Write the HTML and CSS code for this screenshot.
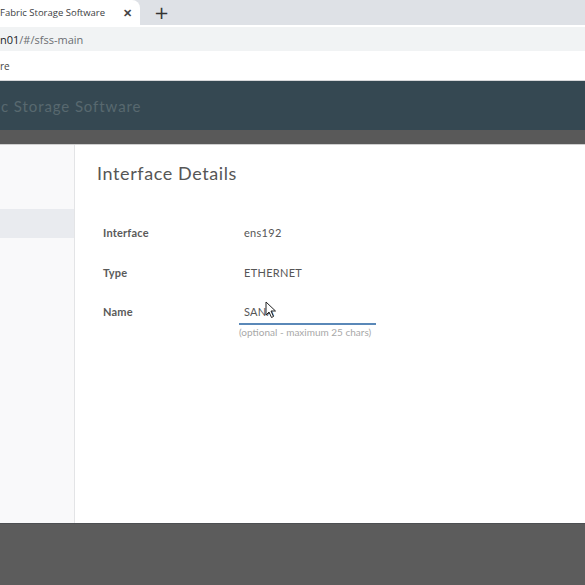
FILE: index.html
```html
<!DOCTYPE html>
<html>
<head>
<meta charset="utf-8">
<link rel="stylesheet" href="styles.css">
</head>
<body>
<div class="tabbar">
  <div class="tab">
    <span class="tab-title">Fabric Storage Software</span>
    <span class="tab-close">✕</span>
  </div>
  <span class="newtab">+</span>
</div>
<div class="toolbar">
  <div class="omnibox"><span class="host">n01</span><span class="path">/#/sfss-main</span></div>
</div>
<div class="bookmarks"><span>re</span></div>
<div class="appheader"><span class="apptitle">c Storage Software</span></div>
<div class="subband"></div>
<div class="content">
  <div class="sidebar">
    <div class="nav-item selected"></div>
  </div>
  <div class="main">
    <h1 class="title">Interface Details</h1>
    <div class="form">
      <div class="row">
        <div class="label">Interface</div>
        <div class="value">ens192</div>
      </div>
      <div class="row">
        <div class="label">Type</div>
        <div class="value">ETHERNET</div>
      </div>
      <div class="row">
        <div class="label">Name</div>
        <div class="field">
          <div class="input">SANA</div>
          <div class="helper">(optional - maximum 25 chars)</div>
          <svg class="cursor" width="12" height="18" viewBox="0 0 12 18"><path d="M1 1 L1 14 L4 11 L6.5 16.5 L8.5 15.5 L6 10 L10.5 10 Z" fill="#fff" stroke="#222" stroke-width="1" stroke-linejoin="round"/></svg>
        </div>
      </div>
    </div>
  </div>
</div>
<div class="footer"></div>
</body>
</html>
```
FILE: styles.css
```css
html, body {
  margin: 0;
  padding: 0;
  width: 585px;
  height: 585px;
  overflow: hidden;
  font-family: Lato, "Open Sans", sans-serif;
  background: #fff;
}
.tabbar {
  height: 25px;
  background: #dee1e6;
  display: flex;
  align-items: flex-end;
}
.tab {
  width: 140px;
  height: 25px;
  background: #fff;
  border-top-right-radius: 8px;
  display: flex;
  align-items: center;
  justify-content: space-between;
  padding-right: 8px;
  box-sizing: border-box;
  font-family: "Open Sans", sans-serif;
  font-size: 9.5px;
  color: #3c4043;
}
.tab-title { white-space: nowrap; }
.tab-close { font-size: 11px; color: #444; font-weight: bold; }
.newtab {
  align-self: center;
  margin-left: 14px;
  font-size: 18px;
  line-height: 20px;
  color: #333;
  font-family: "DejaVu Sans", sans-serif;
}
.toolbar {
  height: 26px;
  background: #fff;
  padding-top: 2px;
  box-sizing: border-box;
}
.omnibox {
  height: 24px;
  background: #f1f3f4;
  display: flex;
  align-items: center;
  font-family: "Open Sans", sans-serif;
  font-size: 11px;
}
.host { color: #202124; }
.path { color: #6b6e72; }
.bookmarks {
  height: 30px;
  background: #fff;
  border-bottom: 1px solid #d7d8da;
  display: flex;
  align-items: center;
  font-family: "Open Sans", sans-serif;
  font-size: 10px;
  color: #444;
  box-sizing: border-box;
}
.appheader {
  height: 49px;
  background: #354852;
  display: flex;
  align-items: center;
}
.apptitle {
  margin-left: 1px;
  font-size: 15px;
  color: #58686f;
  letter-spacing: 0.9px;
}
.subband {
  height: 14px;
  background: #595959;
  border-bottom: 1px solid #cfcfcf;
}
.content {
  height: 378px;
  display: flex;
}
.sidebar {
  width: 75px;
  background: #f9f9fa;
  border-right: 1px solid #e3e4e6;
  padding-top: 64px;
  box-sizing: border-box;
}
.nav-item {
  height: 29px;
}
.nav-item.selected {
  background: #e9ebef;
}
.main {
  flex: 1;
  background: #fff;
  padding: 16px 0 0 22px;
}
.title {
  margin: 0;
  font-size: 18px;
  line-height: 24px;
  font-weight: 400;
  color: #565656;
  letter-spacing: 0.6px;
}
.form {
  margin-top: 40px;
  padding-left: 6px;
  display: flex;
  flex-direction: column;
  gap: 23.5px;
}
.row {
  display: flex;
  align-items: flex-start;
  height: 16px;
  font-size: 11px;
  line-height: 16px;
  color: #565656;
}
.label {
  width: 141px;
  font-weight: 700;
  color: #5a5a5a;
  letter-spacing: 0.2px;
}
.value {
  color: #565656;
  letter-spacing: 0.3px;
}
.field {
  position: relative;
  margin-left: -5px;
  width: 137px;
}
.input {
  padding-left: 5px;
  height: 20px;
  border-bottom: 2px solid #5a88b8;
  color: #565656;
  letter-spacing: 0.3px;
  line-height: 18px;
  margin-top: -1px;
}
.helper {
  font-size: 10px;
  color: #a8a8a8;
  line-height: 12px;
  margin-top: 1px;
  white-space: nowrap;
}
.cursor {
  position: absolute;
  left: 26px;
  top: -3px;
}
.footer {
  height: 62px;
  background: #5c5c5c;
  border-top: 1px solid #4d4f52;
}
```
